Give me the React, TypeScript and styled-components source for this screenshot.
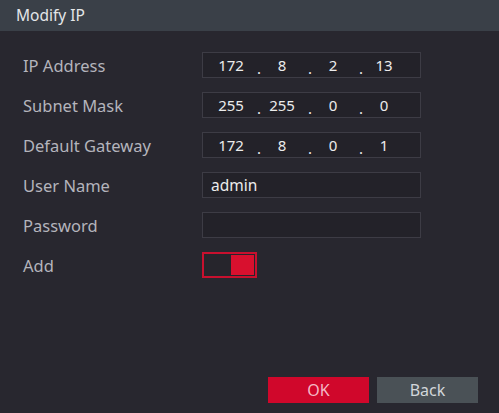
import React from 'react';
import styled, { createGlobalStyle } from 'styled-components';

const GlobalStyle = createGlobalStyle`
  html, body {
    margin: 0;
    padding: 0;
    background: #28272f;
  }
  * {
    box-sizing: border-box;
  }
`;

const Dialog = styled.div`
  width: 499px;
  height: 413px;
  background: #28272f;
  font-family: 'Noto Sans', 'Open Sans', sans-serif;
  display: flex;
  flex-direction: column;
  overflow: hidden;
`;

const TitleBar = styled.div`
  height: 31px;
  background: #3a4048;
  color: #e4e6e8;
  font-size: 15.5px;
  padding: 0 0 2px 16px;
  display: flex;
  align-items: center;
`;

const Form = styled.div`
  display: flex;
  flex-direction: column;
  gap: 14px;
  padding: 21px 0 0 23px;
`;

const Row = styled.div`
  display: flex;
  align-items: center;
  height: 26px;
`;

const Label = styled.div`
  width: 179px;
  color: #b4b4bc;
  font-size: 16.5px;
`;

const Field = styled.div`
  width: 219px;
  height: 26px;
  border: 1px solid #3d3c45;
  background: #232229;
  color: #ececec;
  font-size: 15px;
  display: flex;
  align-items: center;
  padding-left: 6px;
`;

const TextValue = styled.span`
  padding-left: 2px;
  font-size: 15.5px;
`;

const Segment = styled.span`
  width: 44px;
  text-align: center;
`;

const Dot = styled.span`
  width: 7px;
  padding: 6px 0 0 4px;
`;

const Toggle = styled.div`
  width: 55px;
  height: 26px;
  border: 2px solid #c8102e;
  background: #26252c;
  display: flex;
  justify-content: flex-end;
  padding: 1px;
`;

const Knob = styled.div`
  width: 23px;
  height: 100%;
  background: #d8102e;
`;

const Footer = styled.div`
  margin-top: auto;
  display: flex;
  justify-content: flex-end;
  gap: 8px;
  padding: 0 21px 10px 0;
`;

const Button = styled.button<{ $primary?: boolean }>`
  width: 101px;
  height: 26px;
  border: none;
  font-family: inherit;
  font-size: 16px;
  background: ${(p) => (p.$primary ? '#d0072b' : '#4a5156')};
  color: ${(p) => (p.$primary ? '#f4b8c4' : '#d2d6da')};
  padding: 0;
`;

const IpField: React.FC<{ parts: string[] }> = ({ parts }) => (
  <Field>
    {parts.map((p, i) => (
      <React.Fragment key={i}>
        <Segment>{p}</Segment>
        {i < parts.length - 1 && <Dot>.</Dot>}
      </React.Fragment>
    ))}
  </Field>
);

export default function App() {
  return (
    <Dialog>
      <GlobalStyle />
      <TitleBar>Modify IP</TitleBar>
      <Form>
        <Row>
          <Label>IP Address</Label>
          <IpField parts={['172', '8', '2', '13']} />
        </Row>
        <Row>
          <Label>Subnet Mask</Label>
          <IpField parts={['255', '255', '0', '0']} />
        </Row>
        <Row>
          <Label>Default Gateway</Label>
          <IpField parts={['172', '8', '0', '1']} />
        </Row>
        <Row>
          <Label>User Name</Label>
          <Field>
            <TextValue>admin</TextValue>
          </Field>
        </Row>
        <Row>
          <Label>Password</Label>
          <Field />
        </Row>
        <Row>
          <Label>Add</Label>
          <Toggle>
            <Knob />
          </Toggle>
        </Row>
      </Form>
      <Footer>
        <Button $primary>OK</Button>
        <Button>Back</Button>
      </Footer>
    </Dialog>
  );
}
